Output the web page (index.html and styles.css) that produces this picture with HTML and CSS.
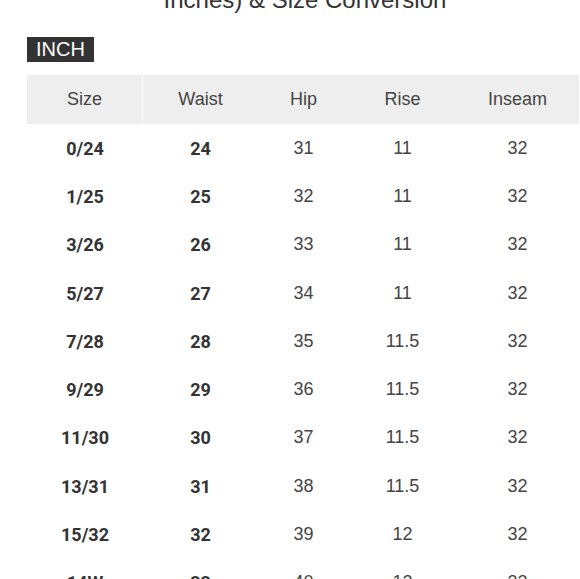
FILE: index.html
```html
<!DOCTYPE html>
<html lang="en">
<head>
<meta charset="utf-8">
<title>Size Conversion</title>
<link rel="stylesheet" href="styles.css">
</head>
<body>
<div class="page">
  <h2 class="title">Inches) &amp; Size Conversion</h2>
  <div class="unit"><span class="badge">INCH</span></div>
  <div class="chart">
    <div class="row head">
      <div class="cell first">Size</div>
      <div class="cell">Waist</div>
      <div class="cell">Hip</div>
      <div class="cell">Rise</div>
      <div class="cell">Inseam</div>
    </div>
    <div class="row"><div class="cell b">0/24</div><div class="cell b">24</div><div class="cell">31</div><div class="cell">11</div><div class="cell">32</div></div>
    <div class="row"><div class="cell b">1/25</div><div class="cell b">25</div><div class="cell">32</div><div class="cell">11</div><div class="cell">32</div></div>
    <div class="row"><div class="cell b">3/26</div><div class="cell b">26</div><div class="cell">33</div><div class="cell">11</div><div class="cell">32</div></div>
    <div class="row"><div class="cell b">5/27</div><div class="cell b">27</div><div class="cell">34</div><div class="cell">11</div><div class="cell">32</div></div>
    <div class="row"><div class="cell b">7/28</div><div class="cell b">28</div><div class="cell">35</div><div class="cell">11.5</div><div class="cell">32</div></div>
    <div class="row"><div class="cell b">9/29</div><div class="cell b">29</div><div class="cell">36</div><div class="cell">11.5</div><div class="cell">32</div></div>
    <div class="row"><div class="cell b">11/30</div><div class="cell b">30</div><div class="cell">37</div><div class="cell">11.5</div><div class="cell">32</div></div>
    <div class="row"><div class="cell b">13/31</div><div class="cell b">31</div><div class="cell">38</div><div class="cell">11.5</div><div class="cell">32</div></div>
    <div class="row"><div class="cell b">15/32</div><div class="cell b">32</div><div class="cell">39</div><div class="cell">12</div><div class="cell">32</div></div>
    <div class="row"><div class="cell b">14W</div><div class="cell b">33</div><div class="cell">40</div><div class="cell">12</div><div class="cell">32</div></div>
  </div>
</div>
</body>
</html>
```
FILE: styles.css
```css
html, body {
  margin: 0;
  padding: 0;
  background: #fff;
  overflow: hidden;
}

.page {
  width: 552px;
  padding-left: 27px;
  font-family: "Liberation Sans", Arial, sans-serif;
  color: #444;
}

.title {
  margin: -14px 0 0 0;
  font-size: 24px;
  line-height: 28px;
  font-weight: normal;
  color: #333;
  text-align: center;
  padding-left: 4px;
}

.unit {
  margin-top: 23px;
  display: flex;
}

.badge {
  background: #333;
  color: #fff;
  font-size: 20px;
  line-height: 25px;
  height: 25px;
  padding: 0 9px;
}

.chart {
  margin-top: 13px;
  display: flex;
  flex-direction: column;
}

.row {
  display: grid;
  grid-template-columns: 116px 115px 91px 107px 123px;
  height: 48.3px;
  align-items: center;
}

.row.head {
  height: 49px;
  background: #eeeeee;
  align-items: stretch;
}

.cell {
  text-align: center;
  font-size: 18px;
  color: #444;
  display: flex;
  align-items: center;
  justify-content: center;
}

.head .first {
  border-right: 1px solid #fff;
}

.cell.b {
  font-family: Roboto, "Liberation Sans", sans-serif;
  font-weight: bold;
  color: #333;
}
```
